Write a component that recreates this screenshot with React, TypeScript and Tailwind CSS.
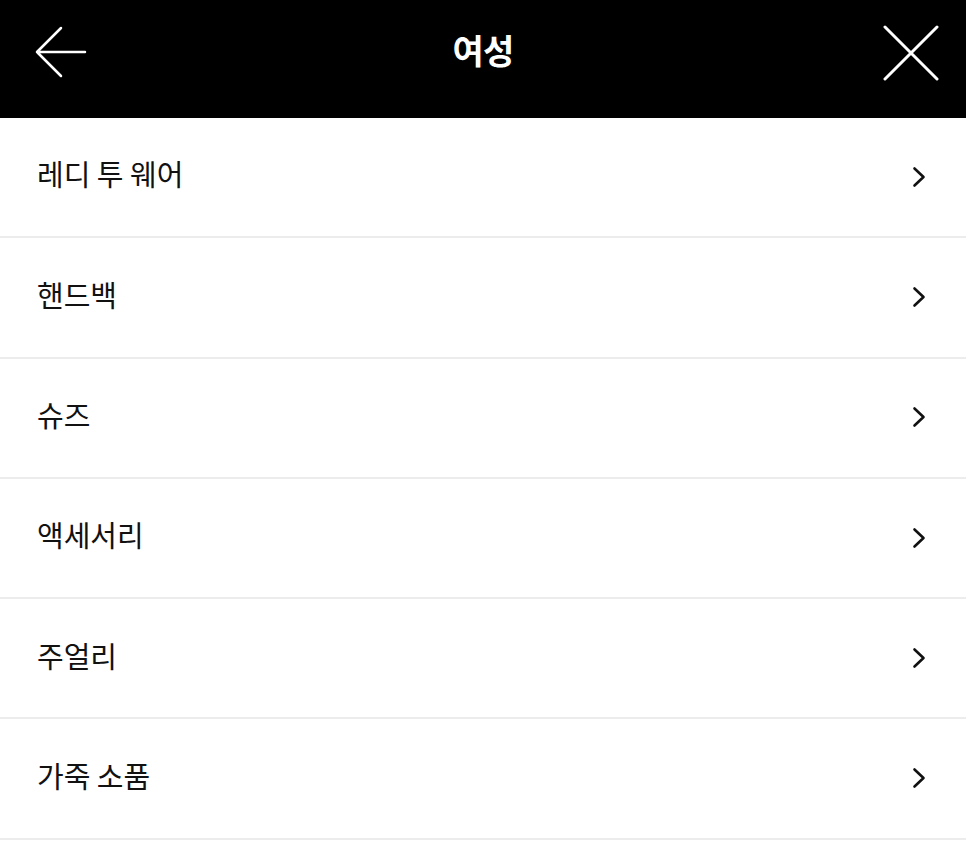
const items = ['레디 투 웨어', '핸드백', '슈즈', '액세서리', '주얼리', '가죽 소품']

export default function App() {
  return (
    <div className="min-h-screen bg-white" style={{ fontFamily: '"Noto Sans CJK KR", "Noto Sans", sans-serif' }}>
      {/* header */}
      <div className="h-[118px] bg-black flex items-center justify-between">
        <div className="w-[120px] flex items-center">
          <svg width="52" height="52" viewBox="0 0 52 52" fill="none" className="ml-[35px] -mt-[14px]">
            <path d="M26 2 L2 26 L26 50 M2 26 L50 26" stroke="white" strokeWidth="2.5" strokeLinecap="round" strokeLinejoin="round" />
          </svg>
        </div>
        <h1 className="text-white text-[34px] font-bold -mt-[20px] tracking-tight">여성</h1>
        <div className="w-[120px] flex items-center justify-end">
          <svg width="58" height="56" viewBox="0 0 58 56" fill="none" className="mr-[26px] -mt-[12px]">
            <path d="M3 2 L55 54 M55 2 L3 54" stroke="white" strokeWidth="3" strokeLinecap="round" />
          </svg>
        </div>
      </div>

      {/* menu list */}
      <ul>
        {items.map((label) => (
          <li
            key={label}
            className="h-[120.3px] border-b-[2px] border-[#ececec] flex items-center justify-between pl-[37px] pr-[40px]"
          >
            <span className="text-[29px] text-[#111] pb-[6px]">{label}</span>
            <svg width="14" height="22" viewBox="0 0 14 22" fill="none" className="-mt-[1px]">
              <path d="M2.5 2.5 L11.5 11 L2.5 19.5" stroke="#111" strokeWidth="2.6" strokeLinecap="round" strokeLinejoin="round" />
            </svg>
          </li>
        ))}
      </ul>
    </div>
  )
}
